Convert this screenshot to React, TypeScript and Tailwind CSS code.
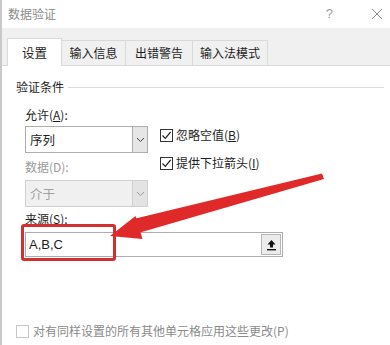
import React from "react";

const font = { fontFamily: '"Noto Sans CJK SC", "Noto Sans", sans-serif' };

function Chevron({ color = "#444" }: { color?: string }) {
  return (
    <svg width="9" height="6" viewBox="0 0 9 6">
      <path d="M1 1 L4.5 4.5 L8 1" fill="none" stroke={color} strokeWidth="1" />
    </svg>
  );
}

function Check() {
  return (
    <div className="w-[13px] h-[13px] border border-[#333] bg-white flex items-center justify-center shrink-0">
      <svg width="11" height="11" viewBox="0 0 11 11">
        <path d="M1.5 5.5 L4.3 8.4 L9.6 2" fill="none" stroke="#222" strokeWidth="1.2" />
      </svg>
    </div>
  );
}

export default function App() {
  return (
    <div
      className="relative w-[390px] h-[345px] bg-white overflow-hidden border-l-2 border-[#c9c9c9] text-[12px] leading-[14px] text-[#1e1e1e]"
      style={font}
    >
      {/* title bar */}
      <div className="h-[28px] flex items-center pl-[6px]">
        <span className="text-[#8c8c8c] text-[12px]">数据验证</span>
        <div className="flex-1" />
        <span className="text-[#9a9a9a] text-[13px] mr-[38px]" style={{ fontFamily: '"Liberation Sans", sans-serif' }}>?</span>
        <svg width="12" height="12" viewBox="0 0 12 12" className="mr-[7px]">
          <path d="M1 1 L11 11 M11 1 L1 11" stroke="#8a8a8a" strokeWidth="1" />
        </svg>
      </div>

      {/* tab strip */}
      <div className="h-[38px] bg-[#f0f0f0] flex items-end pl-[5px] border-b border-[#d9d9d9]">
        <div className="w-[55px] h-[28px] bg-white border border-b-0 border-[#d9d9d9] flex items-center justify-center mb-[-1px] text-[12.5px]">
          设置
        </div>
        <div className="w-[64px] h-[25px] border-t border-r border-[#d9d9d9] flex items-center justify-center">
          输入信息
        </div>
        <div className="w-[67px] h-[25px] border-t border-r border-[#d9d9d9] flex items-center justify-center">
          出错警告
        </div>
        <div className="w-[75px] h-[25px] border-t border-r border-[#d9d9d9] flex items-center justify-center">
          输入法模式
        </div>
      </div>

      {/* content */}
      <div className="pl-[14px]">
        <div className="mt-[14px] h-[14px] flex items-center">
          <span>验证条件</span>
          <div className="flex-1 h-px bg-[#dcdcdc] ml-[4px] mr-[6px]" />
        </div>

        <div className="pl-[9px]">
          <div className="mt-[14px] h-[14px]">
            允许(<span className="underline">A</span>):
          </div>
          <div className="flex">
            <div className="w-[123px]">
              <div className="mt-[4px] h-[27px] border border-[#adadad] bg-white flex">
                <div className="flex-1 flex items-center pl-[4px] text-[12.5px]">序列</div>
                <div className="w-[15px] bg-[#e6e6e6] border-l border-[#adadad] flex items-center justify-center">
                  <Chevron />
                </div>
              </div>
              <div className="mt-[7px] h-[14px] text-[#9b9b9b]">数据(D):</div>
              <div className="mt-[6px] h-[27px] border border-[#cfcfcf] bg-[#f0f0f0] flex">
                <div className="flex-1 flex items-center pl-[4px] text-[#a0a0a0] text-[12.5px]">介于</div>
                <div className="w-[15px] bg-[#e3e3e3] border-l border-[#cfcfcf] flex items-center justify-center">
                  <Chevron color="#9a9a9a" />
                </div>
              </div>
            </div>
            <div className="ml-[12px] pt-[6px]">
              <div className="flex items-center h-[14px] gap-[3px]">
                <Check />
                <span>
                  忽略空值(<span className="underline">B</span>)
                </span>
              </div>
              <div className="flex items-center h-[14px] gap-[3px] mt-[14px]">
                <Check />
                <span>
                  提供下拉箭头(<span className="underline">I</span>)
                </span>
              </div>
            </div>
          </div>

          <div className="mt-[5px] h-[14px]">
            来源(<span className="underline">S</span>):
          </div>
          <div className="mt-[6px] h-[25px] w-[258px] border border-[#adadad] bg-white flex">
            <div className="flex-1 flex items-center pl-[3px] text-[13px]" style={{ fontFamily: '"Liberation Sans", "Noto Sans", sans-serif' }}>
              A,B,C
            </div>
            <div className="w-[20px] my-[1px] mr-[1px] bg-[#ececec] border border-[#b5b5b5] flex items-center justify-center">
              <svg width="11" height="12" viewBox="0 0 11 12">
                <path d="M5.5 1 L9.5 5.5 L7 5.5 L7 8.5 L4 8.5 L4 5.5 L1.5 5.5 Z" fill="#111" />
                <rect x="1" y="10" width="9" height="1.4" fill="#111" />
              </svg>
            </div>
          </div>
        </div>

        <div className="mt-[67px] h-[14px] flex items-center gap-[4px] text-[#8a8a8a]">
          <div className="w-[13px] h-[13px] border border-[#c8c8c8] bg-white shrink-0" />
          <span>对有同样设置的所有其他单元格应用这些更改(P)</span>
        </div>
      </div>

      {/* annotation overlays */}
      <div className="absolute left-[19px] top-[224px] w-[95px] h-[37px] border-[3px] border-[#d42f2f] rounded-[3px]" />
      <svg className="absolute left-0 top-0 pointer-events-none" width="390" height="345" viewBox="0 0 390 345">
        <polygon points="320,173.5 322,179 138,232.5 133.5,218.5" fill="#e02a2a" />
        <polygon points="108,236 133.5,216 140.5,239" fill="#e02a2a" />
      </svg>
    </div>
  );
}
